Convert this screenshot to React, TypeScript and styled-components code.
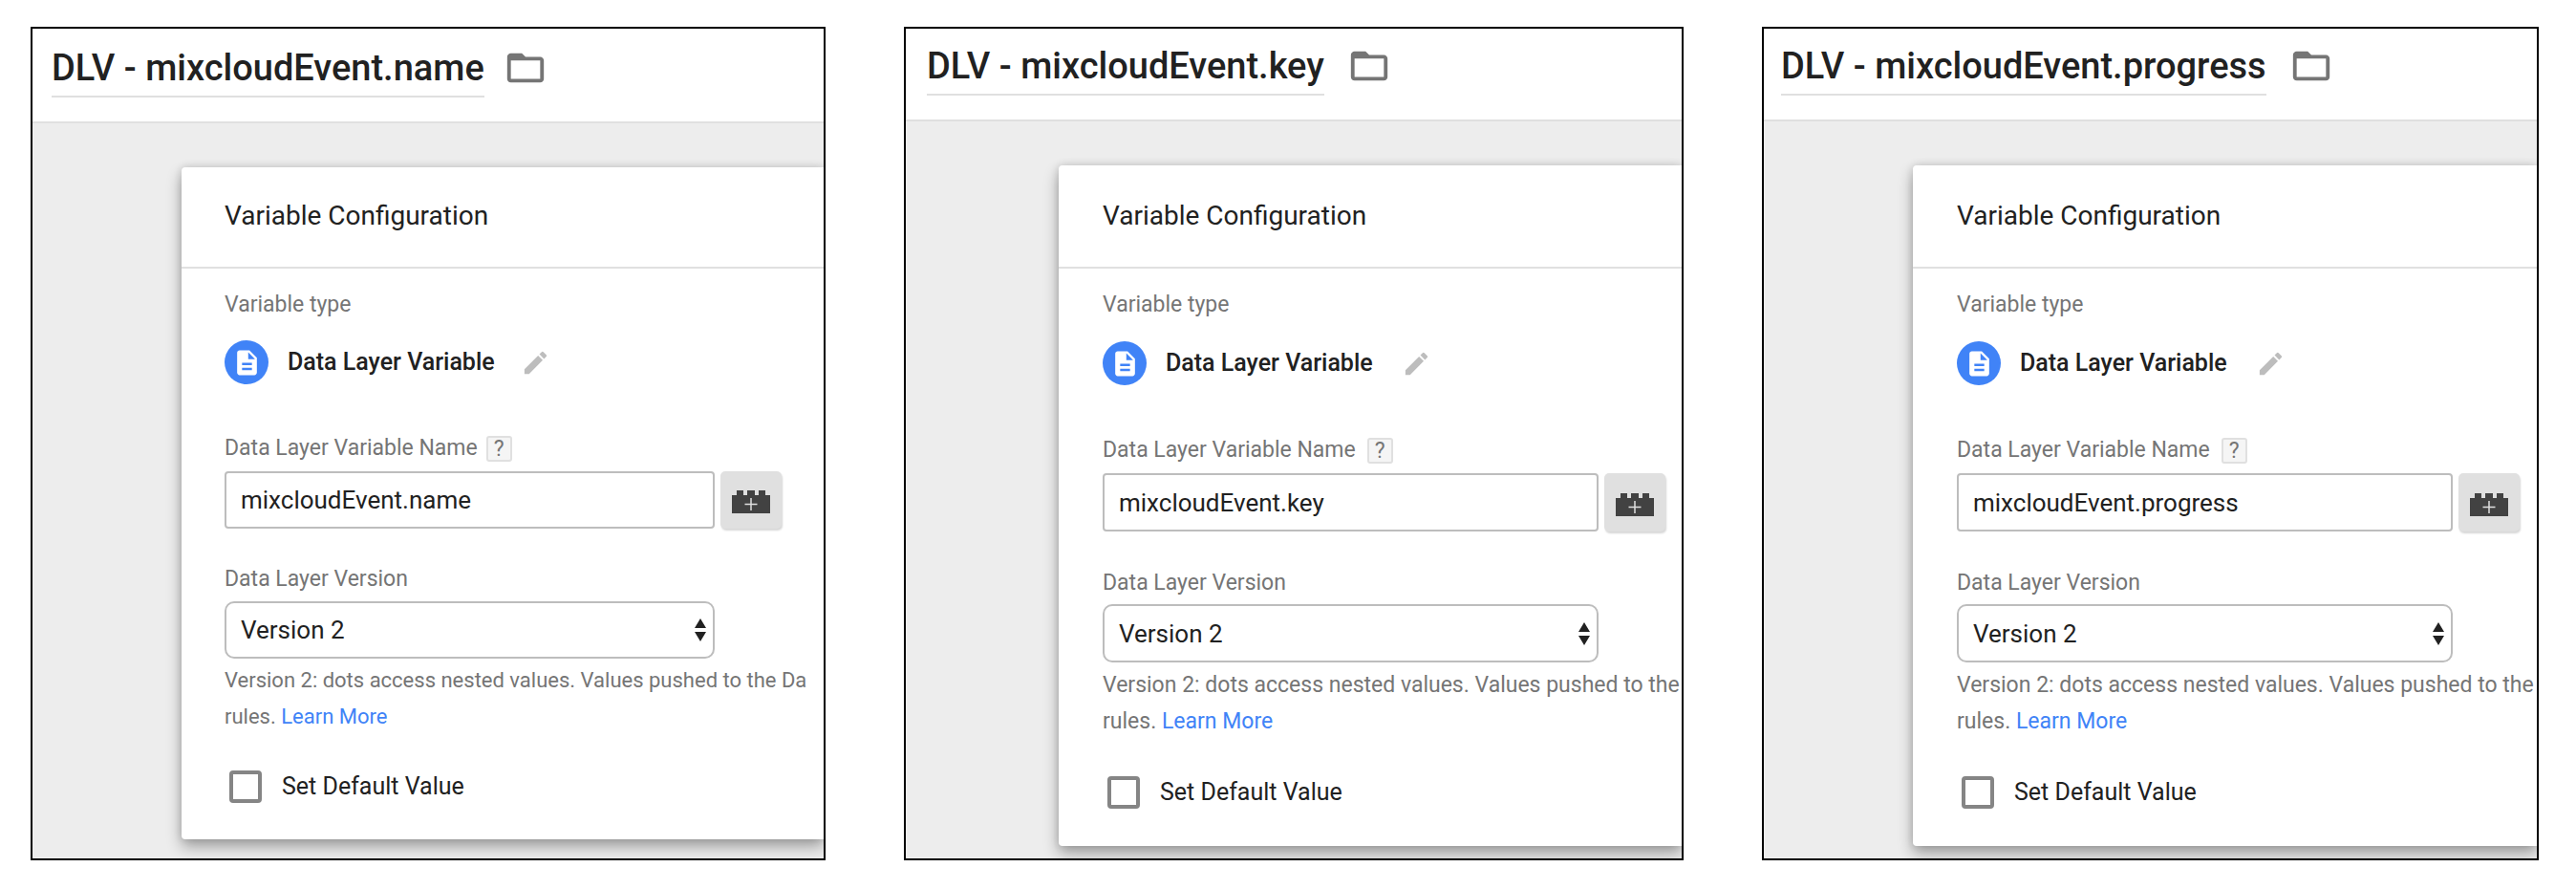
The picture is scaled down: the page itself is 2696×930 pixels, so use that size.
import React, { useId, useState } from "react";
import styled, { createGlobalStyle } from "styled-components";
import { MdDescription, MdEdit, MdFolderOpen } from "react-icons/md";

type Size = "regular" | "large";

interface Sized {
  $size: Size;
}

/* Large panels are spaced slightly wider than regular ones, by one pixel unless a step is given. */
const grow = (base: number, step = 1) => (p: Sized) =>
  `${p.$size === "large" ? base + step : base}px`;

const GlobalStyle = createGlobalStyle`
  *, *::before, *::after { box-sizing: border-box; }
  body {
    margin: 0;
    background: #fff;
    color: #212121;
    font-family: Roboto, "Liberation Sans", sans-serif;
  }
  button, input, select { font: inherit; color: inherit; }
`;

const Page = styled.main`
  display: grid;
  grid-template-columns: 832fr 816fr 813fr;
  gap: 82px;
  padding: 28px 39px 30px 32px;
`;

const Panel = styled.section`
  display: flex;
  flex-direction: column;
  min-width: 0;
  overflow: hidden;
  border: 2px solid #000;
  background: #ededed;
`;

const PanelHeader = styled.header<Sized & { $inset: number }>`
  display: flex;
  align-items: flex-start;
  gap: ${grow(20, 4)};
  padding: ${grow(18, -2)} 20px 25px ${(p) => p.$inset}px;
  border-bottom: 2px solid #e0e0e0;
  background: #fff;
`;

const PanelTitle = styled.h1`
  margin: 0;
  padding-bottom: 6px;
  border-bottom: 2px solid #e0e0e0;
  font-size: 38px;
  font-weight: 500;
  line-height: 46px;
  white-space: nowrap;
`;

const IconButton = styled.button`
  display: flex;
  flex: none;
  padding: 0;
  border: 0;
  background: none;
  color: #bdbdbd;
  cursor: pointer;
`;

const FolderButton = styled(IconButton)`
  color: #757575;
`;

const PanelBody = styled.div<Sized & { $inset: number }>`
  flex: 1;
  padding: 46px 0 13px ${(p) => p.$inset + (p.$size === "large" ? 138 : 136)}px;
`;

const Card = styled.article`
  border-radius: 4px 0 0 4px;
  background: #fff;
  box-shadow: 0 0 8px rgba(0, 0, 0, 0.14), 0 8px 16px rgba(0, 0, 0, 0.32);
`;

const CardTitle = styled.h2<Sized>`
  margin: 0;
  padding: ${grow(35, 2)} 46px 37px ${grow(45)};
  border-bottom: 2px solid #e0e0e0;
  font-size: 28px;
  font-weight: 400;
  line-height: 32px;
`;

const CardBody = styled.div<Sized>`
  padding: 25px 0 ${grow(38)} ${grow(45)};
`;

const Caption = styled.p`
  margin: 0;
  color: #757575;
  font-size: 23px;
  line-height: 26px;
`;

const TypeRow = styled.div<Sized>`
  display: flex;
  align-items: center;
  margin-top: ${grow(24)};
`;

const TypeBadge = styled.span`
  display: flex;
  align-items: center;
  justify-content: center;
  width: 46px;
  height: 46px;
  margin-right: 20px;
  border-radius: 50%;
  background: #4083f7;
  color: #fff;
`;

const TypeName = styled.span<Sized>`
  margin-right: ${grow(27, 3)};
  font-size: 25px;
  font-weight: 500;
  line-height: 30px;
`;

const LabelRow = styled.div<Sized>`
  display: flex;
  align-items: center;
  gap: ${grow(9, 3)};
  height: 28px;
  margin-top: ${grow(53)};
`;

const FieldLabel = styled.label`
  color: #757575;
  font-size: 23px;
  line-height: 28px;
`;

const HelpButton = styled.button`
  width: 27px;
  height: 27px;
  padding: 0;
  border: 2px solid #e0e0e0;
  border-radius: 3px;
  background: #f5f5f5;
  color: #757575;
  font-size: 23px;
  line-height: 24px;
  text-align: center;
`;

const FieldRow = styled.div`
  display: flex;
  gap: 6px;
  margin-top: 10px;
`;

const TextInput = styled.input<Sized>`
  flex: 1;
  min-width: 0;
  max-width: ${grow(513, 6)};
  height: ${grow(60)};
  padding: 0 15px;
  border: 2px solid #bdbdbd;
  border-radius: 4px;
  background: #fff;
  font-size: 26px;
`;

const BrickButton = styled.button`
  display: flex;
  align-items: center;
  justify-content: center;
  flex: none;
  width: 64px;
  padding: 4px 0 0;
  border: 0;
  border-radius: 5px;
  background: #e0e0e0;
  box-shadow: 1px 2px 2px rgba(0, 0, 0, 0.16);
`;

const VersionLabel = styled(FieldLabel)<Sized>`
  display: block;
  margin-top: ${grow(39)};
`;

const SelectBox = styled.div<Sized>`
  position: relative;
  max-width: ${grow(513, 6)};
  margin-top: ${grow(9, -1)};
`;

const Select = styled.select<Sized>`
  display: block;
  width: 100%;
  height: ${grow(60)};
  padding: 0 40px 0 15px;
  appearance: none;
  border: 2px solid #bdbdbd;
  border-radius: 10px;
  background: #fff;
  font-size: 26px;
`;

const SelectArrows = styled.svg`
  position: absolute;
  top: 50%;
  right: 9px;
  margin-top: -12px;
  pointer-events: none;
`;

const Hint = styled.p<Sized>`
  margin: ${grow(4)} 0 0;
  color: #757575;
  font-size: ${grow(22)};
  line-height: 38px;
  white-space: nowrap;
`;

const HintLink = styled.a`
  color: #4083f7;
  text-decoration: none;
`;

const DefaultRow = styled.div<Sized>`
  display: flex;
  align-items: center;
  gap: 21px;
  margin: ${grow(37)} 0 0 5px;
`;

const CheckBox = styled.input`
  width: 34px;
  height: 34px;
  margin: 0;
  appearance: none;
  border: 4px solid #858585;
  border-radius: 4px;
  background: #fff;

  &:checked {
    border-color: #4083f7;
    background: #4083f7;
  }
`;

const CheckLabel = styled.label`
  font-size: 25px;
  line-height: 30px;
`;

const BrickIcon = () => (
  <svg width="40" height="24" viewBox="0 0 40 24" aria-hidden="true">
    <path d="M0 5h5V0h7v5h4V0h8v5h4V0h7v5h5v19H0z" fill="#424242" />
    <path d="M20 8v13M13.500 14.500h13" stroke="#e0e0e0" strokeWidth="1.500" />
  </svg>
);

interface VariablePanelProps {
  variable: string;
  hint: string;
  size: Size;
  inset: number;
}

function VariablePanel({ variable, hint, size, inset }: VariablePanelProps) {
  const id = useId();
  const [name, setName] = useState(variable);

  return (
    <Panel>
      <PanelHeader $size={size} $inset={inset}>
        <PanelTitle>DLV - {variable}</PanelTitle>
        <FolderButton type="button" aria-label="Move to folder">
          <MdFolderOpen size={46} />
        </FolderButton>
      </PanelHeader>
      <PanelBody $size={size} $inset={inset}>
        <Card>
          <CardTitle $size={size}>Variable Configuration</CardTitle>
          <CardBody $size={size}>
            <Caption>Variable type</Caption>
            <TypeRow $size={size}>
              <TypeBadge>
                <MdDescription size={31} />
              </TypeBadge>
              <TypeName $size={size}>Data Layer Variable</TypeName>
              <IconButton type="button" aria-label="Edit variable type">
                <MdEdit size={31} />
              </IconButton>
            </TypeRow>

            <LabelRow $size={size}>
              <FieldLabel htmlFor={`${id}-name`}>Data Layer Variable Name</FieldLabel>
              <HelpButton type="button">?</HelpButton>
            </LabelRow>
            <FieldRow>
              <TextInput
                $size={size}
                id={`${id}-name`}
                type="text"
                value={name}
                onChange={(e) => setName(e.target.value)}
              />
              <BrickButton type="button" aria-label="Insert variable">
                <BrickIcon />
              </BrickButton>
            </FieldRow>

            <VersionLabel $size={size} htmlFor={`${id}-version`}>
              Data Layer Version
            </VersionLabel>
            <SelectBox $size={size}>
              <Select $size={size} id={`${id}-version`} defaultValue="2">
                <option value="2">Version 2</option>
              </Select>
              <SelectArrows width="12" height="24" viewBox="0 0 12 24" aria-hidden="true">
                <path d="M6 0l6 10H0zM6 24L0 14h12z" fill="#212121" />
              </SelectArrows>
            </SelectBox>
            <Hint $size={size}>
              {hint}
              <br />
              rules. <HintLink href="#learn-more">Learn More</HintLink>
            </Hint>

            <DefaultRow $size={size}>
              <CheckBox type="checkbox" id={`${id}-default`} />
              <CheckLabel htmlFor={`${id}-default`}>Set Default Value</CheckLabel>
            </DefaultRow>
          </CardBody>
        </Card>
      </PanelBody>
    </Panel>
  );
}

const HINT = "Version 2: dots access nested values. Values pushed to the";

export default function App() {
  return (
    <>
      <GlobalStyle />
      <Page>
        <VariablePanel variable="mixcloudEvent.name" hint={`${HINT} Da`} size="regular" inset={20} />
        <VariablePanel variable="mixcloudEvent.key" hint={HINT} size="large" inset={22} />
        <VariablePanel variable="mixcloudEvent.progress" hint={HINT} size="large" inset={18} />
      </Page>
    </>
  );
}
